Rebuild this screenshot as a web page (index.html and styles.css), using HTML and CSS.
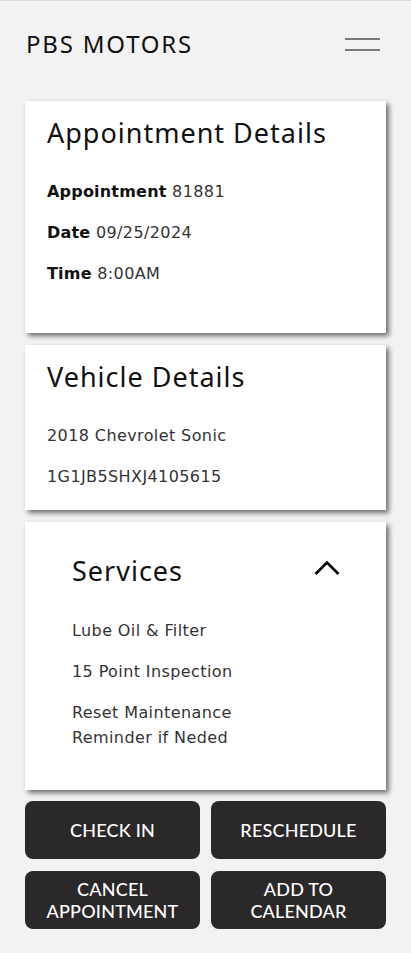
FILE: index.html
```html
<!DOCTYPE html>
<html lang="en">
<head>
<meta charset="utf-8">
<title>PBS Motors - Appointment</title>
<link rel="stylesheet" href="styles.css">
</head>
<body>
<div class="page">
  <header class="topbar">
    <div class="brand">PBS MOTORS</div>
    <button class="menu" aria-label="Menu">
      <span class="menu-line"></span>
      <span class="menu-line"></span>
    </button>
  </header>

  <section class="card card-appt">
    <h2 class="card-title">Appointment Details</h2>
    <p class="row"><b>Appointment</b> 81881</p>
    <p class="row"><b>Date</b> 09/25/2024</p>
    <p class="row"><b>Time</b> 8:00AM</p>
  </section>

  <section class="card card-vehicle">
    <h2 class="card-title">Vehicle Details</h2>
    <p class="row">2018 Chevrolet Sonic</p>
    <p class="row">1G1JB5SHXJ4105615</p>
  </section>

  <section class="card card-services">
    <div class="services-head">
      <h2 class="card-title">Services</h2>
      <svg class="chevron" width="26" height="16" viewBox="0 0 26 16" aria-hidden="true">
        <polyline points="1.5,14 13,2.5 24.5,14" fill="none" stroke="#000" stroke-width="2.6"/>
      </svg>
    </div>
    <p class="row">Lube Oil &amp; Filter</p>
    <p class="row">15 Point Inspection</p>
    <p class="row">Reset Maintenance<br>Reminder if Neded</p>
  </section>

  <div class="actions">
    <button class="btn">CHECK IN</button>
    <button class="btn">RESCHEDULE</button>
    <button class="btn">CANCEL<br>APPOINTMENT</button>
    <button class="btn">ADD TO<br>CALENDAR</button>
  </div>
</div>
</body>
</html>
```

FILE: styles.css
```css
html, body {
  margin: 0;
  padding: 0;
  background: #f2f2f2;
}
body {
  border-top: 1px solid #dcdcdc;
  font-family: "DejaVu Sans", "Noto Sans", sans-serif;
  color: #1e1e1e;
}
.page {
  padding: 0 25px;
}
.topbar {
  display: flex;
  justify-content: space-between;
  align-items: center;
  padding-top: 28px;
  height: 30px;
  margin-bottom: 42px;
}
.brand {
  font-family: "Noto Sans", sans-serif;
  font-size: 24px;
  line-height: 30px;
  letter-spacing: 1.8px;
  color: #111;
  padding-left: 1px;
}
.menu {
  display: flex;
  flex-direction: column;
  gap: 9px;
  padding: 0;
  margin-right: 6px;
  border: 0;
  background: none;
}
.menu-line {
  display: block;
  width: 35px;
  height: 2px;
  background: #7a7a7a;
}
.card {
  background: #fff;
  box-shadow: 3px 3px 5px rgba(0,0,0,0.55);
  padding: 15px 22px 21px;
  margin-bottom: 12px;
}
.card-appt {
  padding-bottom: 47px;
}
.card-services {
  padding: 32px 46px 40px 47px;
  margin-bottom: 11px;
}
.card-title {
  margin: 0 0 29px;
  font-family: "Noto Sans", sans-serif;
  font-weight: 400;
  font-size: 27px;
  line-height: 34px;
  letter-spacing: 1px;
  color: #111;
}
.services-head {
  display: flex;
  justify-content: space-between;
  align-items: flex-start;
}
.services-head .card-title {
  margin-bottom: 30px;
}
.chevron {
  margin-top: 6px;
}
.row {
  margin: 0 0 16px;
  font-size: 16px;
  line-height: 25px;
  letter-spacing: 0.4px;
  color: #333;
}
.row:last-child {
  margin-bottom: 0;
}
.row b {
  font-weight: 700;
  color: #111;
  letter-spacing: 0.2px;
}
.actions {
  display: grid;
  grid-template-columns: 1fr 1fr;
  column-gap: 11px;
  row-gap: 12px;
}
.btn {
  height: 58px;
  border: 0;
  border-radius: 8px;
  background: #2b2829;
  color: #fff;
  font-family: Lato, sans-serif;
  font-size: 18px;
  font-weight: 500;
  line-height: 22px;
  padding: 0;
  letter-spacing: 0.2px;
}
```
